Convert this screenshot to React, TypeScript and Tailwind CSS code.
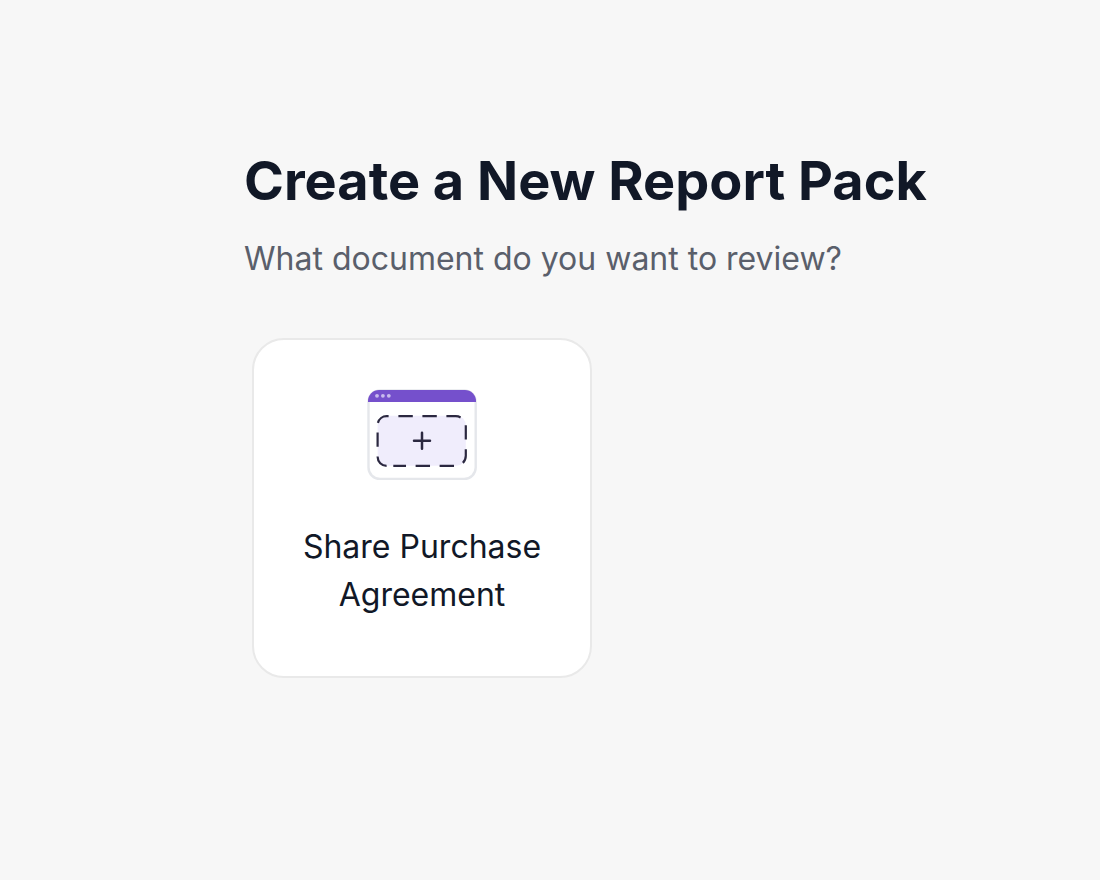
function DocumentIcon() {
  return (
    <svg className="h-[93px] w-[112px]" viewBox="0 0 112 93" fill="none" aria-hidden="true">
      <rect x="2.5" y="2.5" width="107.2" height="88.4" rx="11.5" fill="white" stroke="#E5E7EB" strokeWidth="2.4" />
      <path d="M2 14V13a11 11 0 0 1 11-11h86a11 11 0 0 1 11 11v1z" fill="#7550CC" />
      <circle cx="11" cy="7.8" r="1.9" fill="#C9BBED" />
      <circle cx="16.9" cy="7.8" r="1.9" fill="#C9BBED" />
      <circle cx="22.8" cy="7.8" r="1.9" fill="#C9BBED" />
      <rect x="11.6" y="27.8" width="88.2" height="50" rx="9.5" fill="#F0EDFC" />
      <g stroke="#2B2840" strokeWidth="2.2" strokeDasharray="14.4 9.6">
        <path d="M32.4 28.2H89.800a10 10 0 0 1 10 10V67.800a10 10 0 0 1-10 10H27.300" />
        <path d="M20.600 77.800a9 9 0 0 1-9-9V37.200a9 9 0 0 1 9-9h2" />
      </g>
      <path d="M56 44.8v16M48 52.8h16" stroke="#2B2840" strokeWidth="2.5" strokeLinecap="round" />
    </svg>
  );
}

export default function App() {
  return (
    <main className="min-h-screen bg-[#f7f7f7] px-6 pt-36 pb-12 font-['Inter',sans-serif] text-[#111827]">
      <div className="mx-auto w-full max-w-[612px]">
        <h1 className="text-[54px] leading-[74px] font-bold lg:whitespace-nowrap">Create a New Report Pack</h1>
        <p className="mt-[17px] text-[32px] leading-[48px] text-[#5a5f6b]">What document do you want to review?</p>
        <button
          type="button"
          className="mt-[55px] ml-2 flex min-h-[340px] w-[340px] flex-col items-center rounded-[32px] border-2 border-[#e9e9e9] bg-white px-8 pt-12 pb-10 text-[32px] leading-[48px]"
        >
          <DocumentIcon />
          <span className="mt-[42px]">Share Purchase Agreement</span>
        </button>
      </div>
    </main>
  );
}
